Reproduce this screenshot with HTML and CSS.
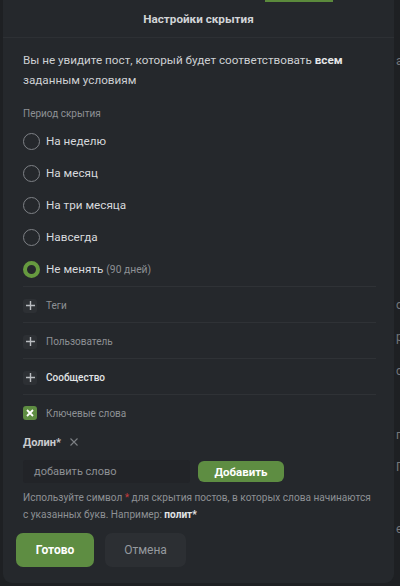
FILE: index.html
```html
<!DOCTYPE html>
<html lang="ru">
<head>
<meta charset="utf-8">
<link rel="stylesheet" href="styles.css">
</head>
<body>
<div class="peek-green"></div>
<div class="bg-text">
  <span class="bg-ch bg-a">а</span>
  <span class="bg-ch bg-b">о</span>
  <span class="bg-ch bg-c">р</span>
  <span class="bg-ch bg-d">с</span>
  <span class="bg-ch bg-e">п</span>
  <span class="bg-ch bg-f">П</span>
  <span class="bg-ch bg-g">е</span>
</div>
<div class="modal">
  <div class="modal-header">Настройки скрытия</div>
  <div class="modal-body">
    <p class="intro">Вы не увидите пост, который будет соответствовать <b>всем</b> заданным условиям</p>
    <div class="section-label">Период скрытия</div>
    <div class="radios">
      <div class="radio-row"><span class="radio"></span><span class="radio-label">На неделю</span></div>
      <div class="radio-row"><span class="radio"></span><span class="radio-label">На месяц</span></div>
      <div class="radio-row"><span class="radio"></span><span class="radio-label">На три месяца</span></div>
      <div class="radio-row"><span class="radio"></span><span class="radio-label">Навсегда</span></div>
      <div class="radio-row"><span class="radio radio-on"></span><span class="radio-label">Не менять <span class="muted">(90 дней)</span></span></div>
    </div>
    <div class="conds">
      <div class="cond-row"><span class="plus-box"><svg width="9" height="9" viewBox="0 0 9 9"><path d="M4.5 0V9M0 4.5H9" stroke="#b9bcc0" stroke-width="1.4"/></svg></span><span class="cond-label">Теги</span></div>
      <div class="cond-row"><span class="plus-box"><svg width="9" height="9" viewBox="0 0 9 9"><path d="M4.5 0V9M0 4.5H9" stroke="#b9bcc0" stroke-width="1.4"/></svg></span><span class="cond-label">Пользователь</span></div>
      <div class="cond-row"><span class="plus-box"><svg width="9" height="9" viewBox="0 0 9 9"><path d="M4.5 0V9M0 4.5H9" stroke="#b9bcc0" stroke-width="1.4"/></svg></span><span class="cond-label cond-strong">Сообщество</span></div>
      <div class="kw-row"><span class="check-box"><svg width="8" height="8" viewBox="0 0 8 8"><path d="M1 1L7 7M7 1L1 7" stroke="#ffffff" stroke-width="1.8"/></svg></span><span class="cond-label">Ключевые слова</span></div>
    </div>
    <div class="tags"><span class="tag">Долин*</span><span class="tag-x"><svg width="8" height="8" viewBox="0 0 8 8"><path d="M0.5 0.5L7.5 7.5M7.5 0.5L0.5 7.5" stroke="#7d8085" stroke-width="1.1"/></svg></span></div>
    <div class="add-row">
      <div class="word-input">добавить слово</div>
      <button class="btn-add">Добавить</button>
    </div>
    <p class="hint">Используйте символ <span class="req">*</span> для скрытия постов, в которых слова начинаются с указанных букв. Например: <b>полит*</b></p>
  </div>
  <div class="modal-footer">
    <button class="btn btn-primary">Готово</button>
    <button class="btn btn-secondary">Отмена</button>
  </div>
</div>
</body>
</html>
```
FILE: styles.css
```css
* { box-sizing: border-box; }
html, body {
  margin: 0;
  padding: 0;
  background: #1e2023;
  font-family: Roboto, "Noto Sans", sans-serif;
  width: 400px;
  height: 586px;
  overflow: hidden;
}
body { position: relative; }

.peek-green {
  position: absolute;
  left: 265px;
  top: 0;
  width: 68px;
  height: 2px;
  background: #5b8a3c;
  z-index: 2;
}
.bg-text { position: absolute; left: 396px; top: 0; width: 4px; height: 586px; overflow: hidden; color: #74777b; font-size: 12px; }
.bg-ch { position: absolute; left: 0; }
.bg-a { top: 54px; }
.bg-b { top: 298px; }
.bg-c { top: 330px; }
.bg-d { top: 364px; }
.bg-e { top: 428px; }
.bg-f { top: 460px; }
.bg-g { top: 522px; }

.modal {
  margin-left: 3px;
  width: 391px;
  height: 583px;
  background: #25282c;
  border-radius: 0 0 9px 9px;
  display: flex;
  flex-direction: column;
  position: relative;
  z-index: 1;
}
.modal-header {
  height: 38px;
  border-bottom: 1px solid #2d3034;
  display: flex;
  align-items: center;
  justify-content: center;
  font-size: 11.7px;
  font-weight: 700;
  color: #d2d4d7;
}
.modal-body {
  padding: 12px 18px 0 20px;
}
.intro {
  margin: 0;
  font-size: 11.7px;
  line-height: 20px;
  color: #cdd0d3;
}
.intro b { color: #e4e6e8; }
.section-label {
  margin-top: 16px;
  font-size: 10px;
  line-height: 16px;
  color: #8d9094;
}
.radios {
  margin-top: 3px;
  display: flex;
  flex-direction: column;
}
.radio-row {
  height: 32px;
  display: flex;
  align-items: center;
  gap: 6px;
}
.radio {
  width: 17px;
  height: 17px;
  border-radius: 50%;
  border: 1.5px solid #7e8186;
  flex: none;
}
.radio-on {
  border: 4px solid #669a3f;
}
.radio-label {
  font-size: 11.7px;
  color: #d7d9dc;
}
.muted { font-size: 10.3px; color: #8d9094; }

.conds { margin-top: 1px; }
.cond-row {
  height: 36px;
  padding-top: 2px;
  border-top: 1px solid #2f3236;
  display: flex;
  align-items: center;
  gap: 9px;
}
.plus-box {
  width: 14px;
  height: 14px;
  border-radius: 3px;
  background: #2d3034;
  display: flex;
  align-items: center;
  justify-content: center;
}
.cond-label {
  font-size: 10px;
  color: #8d9094;
}
.cond-strong { color: #e2e4e6; font-weight: 500; }
.kw-row {
  height: 34px;
  padding-top: 3px;
  border-top: 1px solid #2f3236;
  display: flex;
  align-items: center;
  gap: 9px;
}
.check-box {
  width: 14px;
  height: 14px;
  border-radius: 3px;
  background: #5e8d42;
  display: flex;
  align-items: center;
  justify-content: center;
}
.tags {
  margin-top: 6px;
  height: 16px;
  display: flex;
  align-items: center;
  gap: 9px;
}
.tag {
  font-size: 11px;
  font-weight: 700;
  color: #c9cbce;
}
.tag-x { display: flex; }
.add-row {
  margin-top: 10px;
  display: flex;
  align-items: center;
  gap: 8px;
}
.word-input {
  width: 167px;
  height: 23px;
  background: #222428;
  border-radius: 3px;
  padding-left: 11px;
  font-size: 11px;
  line-height: 23px;
  color: #8d9094;
}
.btn-add {
  width: 86px;
  height: 21px;
  border: none;
  border-radius: 6px;
  background: #5e8d42;
  color: #ffffff;
  font-family: inherit;
  font-size: 11.5px;
  font-weight: 700;
  padding: 0;
}
.hint {
  margin: 6px 0 0;
  padding-right: 4px;
  font-size: 10.1px;
  line-height: 17px;
  color: #8d9094;
}
.hint b { color: #e2e4e6; }
.req { color: #c23b3b; }

.modal-footer {
  margin-top: auto;
  padding: 0 0 16px 13px;
  display: flex;
  gap: 11px;
}
.btn {
  height: 34px;
  border: none;
  border-radius: 7px;
  font-family: inherit;
  font-size: 12px;
  padding: 0;
}
.btn-primary {
  width: 78px;
  background: #5e8d42;
  color: #ffffff;
  font-weight: 700;
}
.btn-secondary {
  width: 81px;
  background: #2c2f33;
  color: #959a9f;
}
```
